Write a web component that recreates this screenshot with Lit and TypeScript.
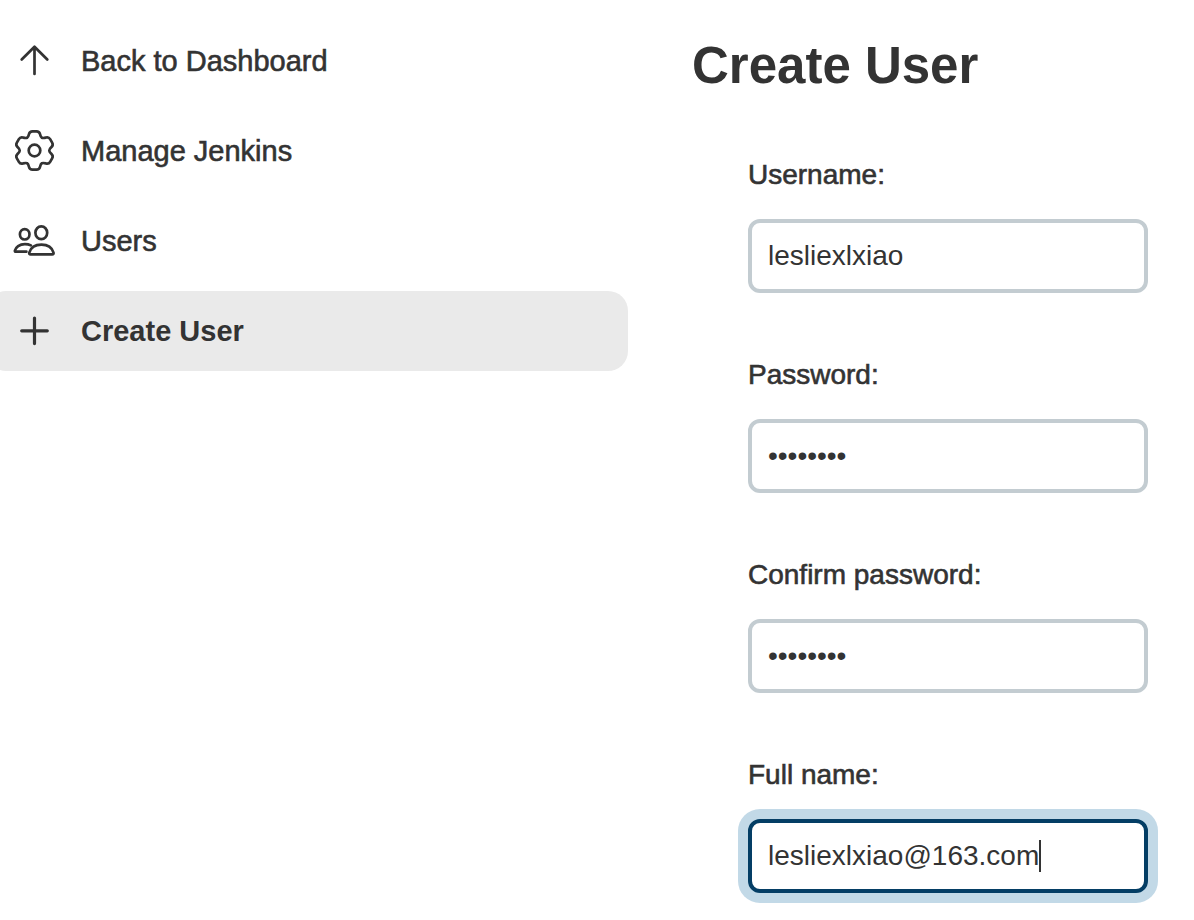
import { LitElement, html, css, svg } from "lit";
import type { SVGTemplateResult } from "lit";
import { customElement, state } from "lit/decorators.js";
import { classMap } from "lit/directives/class-map.js";
import { styleMap } from "lit/directives/style-map.js";

/** Outline of a six-toothed cog with rounded corners. */
function cogPath(cx: number, cy: number): string {
  const points: [number, number][] = [];
  for (let tooth = 0; tooth < 6; tooth++) {
    for (const [angle, radius] of [[-14, 19.8], [14, 19.8], [25, 14.8], [35, 14.8]]) {
      const a = ((tooth * 60 + angle) * Math.PI) / 180;
      points.push([cx + radius * Math.sin(a), cy - radius * Math.cos(a)]);
    }
  }
  const toward = (from: [number, number], to: [number, number]) => {
    const length = Math.hypot(to[0] - from[0], to[1] - from[1]);
    const t = Math.min(2.8, length * 0.5) / length;
    return `${(from[0] + (to[0] - from[0]) * t).toFixed(2)} ${(from[1] + (to[1] - from[1]) * t).toFixed(2)}`;
  };
  const count = points.length;
  return (
    points
      .map((p, i) => {
        const before = points[(i + count - 1) % count];
        const after = points[(i + 1) % count];
        return `${i ? "L" : "M"}${toward(p, before)}Q${p[0].toFixed(2)} ${p[1].toFixed(2)} ${toward(p, after)}`;
      })
      .join("") + "Z"
  );
}

const icons: Record<string, SVGTemplateResult> = {
  up: svg`<path d="M9.700 20.500 22.500 7.700 35.300 20.500M22.500 8V35" />`,
  cog: svg`<path d=${cogPath(22.5, 21.5)} /><circle cx="22.5" cy="21.5" r="5.8" />`,
  people: svg`
    <ellipse cx="29.300" cy="13.800" rx="5.900" ry="6.400" />
    <ellipse cx="12.700" cy="15.300" rx="4.800" ry="5.200" />
    <path d="M18.900 26.400C17.100 25.500 15.200 25.100 12.900 25.100C7.400 25.100 3.700 28.300 2.900 31.500C2.700 32.300 3 32.700 3.800 32.700H14.400" />
    <path d="M29.400 25.700C22.700 25.700 18.600 29.200 17.300 33.600C17 34.800 17.500 35.400 18.600 35.400H40.200C41.300 35.400 41.800 34.800 41.500 33.600C40.200 29.200 36.100 25.700 29.400 25.700Z" />`,
  plus: svg`<path d="M22.500 9V34.600M9.700 21.800H35.300" />`,
};

const tasks = [
  { icon: "up", text: "Back to Dashboard" },
  { icon: "cog", text: "Manage Jenkins" },
  { icon: "people", text: "Users" },
  { icon: "plus", text: "Create User", active: true },
];

const fields = [
  { id: "username", label: "Username:", type: "text", value: "lesliexlxiao" },
  { id: "password", label: "Password:", type: "password", value: "password" },
  { id: "confirm", label: "Confirm password:", type: "password", value: "password" },
  { id: "fullname", label: "Full name:", type: "text", value: "lesliexlxiao@163.com" },
];

@customElement("app-root")
export class AppRoot extends LitElement {
  @state() private focused = "fullname";
  @state() private caretX = 0;

  static styles = css`
    :host {
      display: block;
      color: #333;
      font-family: "Liberation Sans", Arial, sans-serif;
      font-size: 28px;
      line-height: 32px;
    }
    .page {
      display: grid;
      grid-template-columns: minmax(0, 628fr) minmax(0, 566fr);
    }
    .side {
      display: flex;
      flex-direction: column;
      gap: 10px;
      margin-left: -14px;
      padding-top: 21px;
    }
    .task {
      display: flex;
      align-items: center;
      gap: 25px;
      height: 80px;
      padding-left: 26px;
      border-radius: 20px;
      color: inherit;
      font-size: 29px;
      text-decoration: none;
      -webkit-text-stroke: 0.6px;
    }
    .task.active {
      background: #eaeaea;
      font-weight: 700;
      -webkit-text-stroke: 0;
    }
    .icon {
      flex: none;
      width: 44px;
      height: 44px;
      fill: none;
      stroke: currentColor;
      stroke-width: 2.7;
      stroke-linecap: round;
      stroke-linejoin: round;
    }
    .active .icon {
      stroke-width: 3.2;
    }
    .main {
      padding: 36px 46px 28px 64px;
    }
    h1 {
      margin: 0;
      font-size: 51px;
      line-height: 60px;
    }
    form {
      display: flex;
      flex-direction: column;
      gap: 66px;
      padding: 63px 0 0 56px;
    }
    .field {
      display: flex;
      flex-direction: column;
      gap: 28px;
    }
    label {
      -webkit-text-stroke: 0.6px;
    }
    .box {
      position: relative;
      display: flex;
    }
    input {
      box-sizing: border-box;
      width: 100%;
      height: 74px;
      padding: 0 16px;
      border: 4px solid #c3ccd1;
      border-radius: 12px;
      outline: none;
      background: #fff;
      color: inherit;
      font: inherit;
      caret-color: transparent;
    }
    input.focused {
      border-color: #043e65;
      box-shadow: 0 0 0 10px #c2d9e7;
    }
    .caret {
      position: absolute;
      top: 21px;
      width: 2px;
      height: 32px;
      background: #333;
      pointer-events: none;
    }
  `;

  firstUpdated() {
    const input = this.renderRoot.querySelector<HTMLInputElement>("#fullname");
    input?.focus();
    input?.setSelectionRange(input.value.length, input.value.length);
    if (input) this.placeCaret(input);
  }

  private placeCaret(input: HTMLInputElement) {
    const style = getComputedStyle(input);
    const context = document.createElement("canvas").getContext("2d")!;
    context.font = `${style.fontSize} ${style.fontFamily}`;
    const shown = input.type === "password" ? "•".repeat(input.value.length) : input.value;
    const before = shown.slice(0, input.selectionEnd ?? shown.length);
    const inset = parseFloat(style.borderLeftWidth) + parseFloat(style.paddingLeft);
    this.focused = input.id;
    this.caretX = Math.round(inset + context.measureText(before).width);
  }

  private follow(event: Event) {
    this.placeCaret(event.target as HTMLInputElement);
  }

  render() {
    return html`
      <div class="page">
        <nav class="side">
          ${tasks.map(
            (task) => html`
              <a class=${classMap({ task: true, active: !!task.active })} href="#">
                <svg class="icon" viewBox="0 0 44 44" aria-hidden="true">${icons[task.icon]}</svg>
                <span>${task.text}</span>
              </a>
            `
          )}
        </nav>
        <main class="main">
          <h1>Create User</h1>
          <form>
            ${fields.map(
              (field) => html`
                <div class="field">
                  <label for=${field.id}>${field.label}</label>
                  <div class="box">
                    <input
                      id=${field.id}
                      class=${classMap({ focused: this.focused === field.id })}
                      type=${field.type}
                      .value=${field.value}
                      @focus=${this.follow}
                      @input=${this.follow}
                      @keyup=${this.follow}
                      @click=${this.follow}
                    />
                    ${this.focused === field.id
                      ? html`<span class="caret" style=${styleMap({ left: `${this.caretX}px` })}></span>`
                      : ""}
                  </div>
                </div>
              `
            )}
          </form>
        </main>
      </div>
    `;
  }
}
